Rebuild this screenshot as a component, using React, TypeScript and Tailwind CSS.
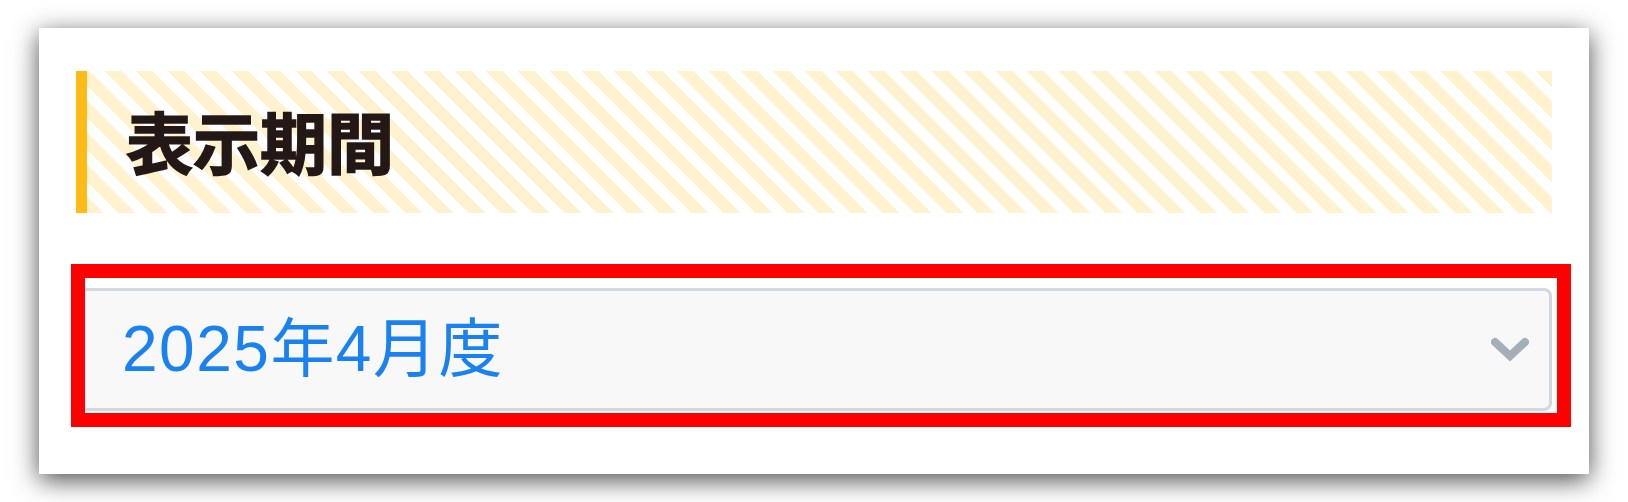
/**
 * DisplayPeriodCard - "表示期間" section with a period select box.
 * The red frame is an annotation drawn over the select.
 */

const periods = ['2025年4月度', '2025年3月度', '2025年2月度'];

export default function App() {
  return (
    <div className="w-[1628px] h-[502px] bg-white px-[39px] py-[28px] font-[family-name:'Noto_Sans_CJK_JP','Noto_Sans',sans-serif]">
      {/* Card */}
      <div className="h-full bg-white shadow-[0_6px_24px_rgba(0,0,0,0.7)] pt-[43px] px-[37px]">
        {/* Section heading */}
        <div className="h-[142px] flex items-center border-l-[11px] border-[#FDBB17] bg-[repeating-linear-gradient(45deg,#FFF2CF_0px,#FFF2CF_12px,#ffffff_12px,#ffffff_22.5px)] pl-[39px]">
          <h2 className="text-[67px] leading-none font-bold [-webkit-text-stroke:1.5px_#231815] text-[#231815] pb-[6px]">
            表示期間
          </h2>
        </div>

        {/* Period select */}
        <div className="relative mt-[75px]">
          <div className="h-[123px] flex items-center justify-between rounded-[8px] border-[3px] border-[#D3D8DE] bg-[#F8F8F8] pl-[43px] pr-[20px]">
            <span className="font-[family-name:'Liberation_Sans','Noto_Sans_CJK_JP',sans-serif] text-[64px] leading-none tracking-[1.5px] text-[#1A82F0] pb-[2px]">
              {periods[0]}
            </span>
            <svg width="38" height="25" viewBox="0 0 38 25" fill="none">
              <path
                d="M4 5 L19 19 L34 5"
                stroke="#A4AFB7"
                strokeWidth="8"
                strokeLinecap="round"
                strokeLinejoin="miter"
              />
            </svg>
          </div>
          {/* Annotation frame */}
          <div className="absolute left-[-5px] right-[-19px] top-[-24px] bottom-[-16px] border-[14px] border-[#FF0000] pointer-events-none" />
        </div>
      </div>
    </div>
  );
}
